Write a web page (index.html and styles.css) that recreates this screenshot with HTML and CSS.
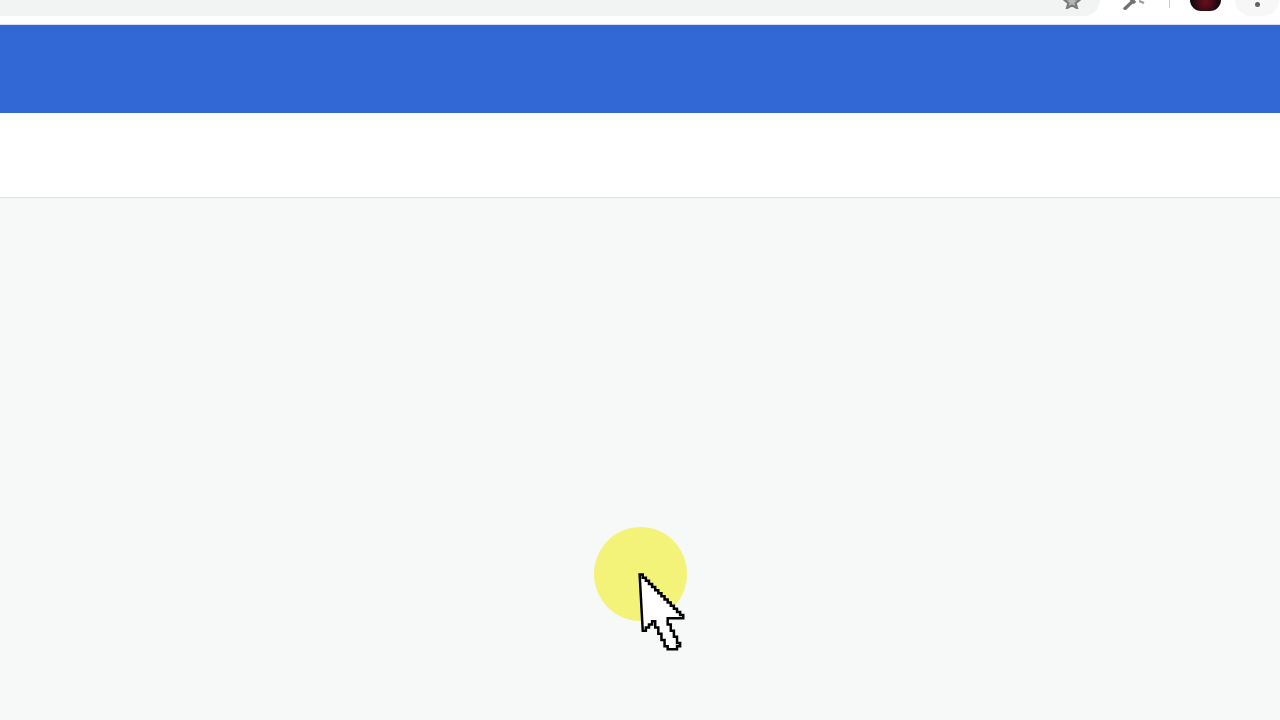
FILE: index.html
```html
<!DOCTYPE html>
<html lang="en">
<head>
<meta charset="utf-8">
<title>Recording</title>
<link rel="stylesheet" href="styles.css">
</head>
<body>
<header class="chrome">
  <div class="omnibox-end">
    <svg class="star" viewBox="0 0 20 10"><path d="M10 -8 L12.6 -1 L19 -.4 L14 3.5 L15.6 9 L10 6 L4.4 9 L6 3.5 L1 -.4 L7.4 -1 Z" fill="#b4b6b8" stroke="#77797b" stroke-width="2.4"/></svg>
  </div>
  <div class="tools">
    <svg class="puzzle" viewBox="0 0 24 10"><path d="M2 9.5 L11 1 M9 -1 L13 3" fill="none" stroke="#6f7274" stroke-width="3.4"/><path d="M17 1 L22 3" fill="none" stroke="#9a9c9e" stroke-width="2.4"/></svg>
    <span class="sep"></span>
    <span class="avatar"></span>
    <span class="menu-wrap"><span class="dot"></span></span>
  </div>
</header>
<div class="bluebar"></div>
<div class="whitebar"></div>
<main class="content">
  <div class="highlight"></div>
  <svg class="cursor" viewBox="0 0 16 26"><path d="M.5 .5h1v1h1v1h1v1h1v1h1v1h1v1h1v1h1v1h1v1h1v1h1v1h1v1h1v1h1v1H9.5v2h1v2h1v2h1v2h1v1h-1v1h-3v-1h-1v-2h-1v-2h-1v-2h-1v-2h-1v1h-1v1h-1v1h-1z" fill="#fff" stroke="#000" stroke-width=".8"/></svg>
</main>
</body>
</html>
```
FILE: styles.css
```css
* { box-sizing: border-box; }
html, body { margin: 0; height: 100%; }
body { width: 1280px; height: 720px; overflow: hidden; display: flex; flex-direction: column; background: #f7f9f9; font-family: "Liberation Sans", sans-serif; }
.chrome { height: 25px; flex: none; background: #fff; display: flex; border-bottom: 1px solid #d5def2; }
.omnibox-end { width: 1100px; height: 16px; background: #f2f3f3; border-radius: 0 0 16px 0; display: flex; justify-content: flex-end; padding-right: 19px; }
.star { width: 18px; height: 9px; }
.tools { width: 180px; display: flex; align-items: flex-start; }
.puzzle { width: 24px; height: 10px; margin-left: 22px; }
.sep { width: 1px; height: 8px; background: #c9cbcd; margin-left: 23px; }
.avatar { width: 31px; height: 11px; margin-left: 20px; background: radial-gradient(circle at 50% 15%, #6a0f1c 0, #4a0c18 35%, #140a10 75%); border-radius: 0 0 16px 16px; }
.menu-wrap { width: 44px; height: 16px; margin-left: 14px; background: #f7f7f7; border-radius: 0 0 22px 22px; display: flex; justify-content: center; align-items: flex-start; }
.dot { width: 5px; height: 5px; margin-top: 2px; background: #5f6264; border-radius: 50%; }
.bluebar { height: 88px; flex: none; background: #3168d6; }
.whitebar { height: 85px; flex: none; background: #fff; border-bottom: 1px solid #dfe3e3; }
.content { flex: 1; position: relative; background: #f7f9f9; }
.highlight { position: absolute; left: 594px; top: 329px; width: 93px; height: 94px; border-radius: 50%; background: #f3f37a; filter: blur(.4px); }
.cursor { position: absolute; left: 638px; top: 375px; width: 50px; height: 81px; filter: blur(.4px); }
```
